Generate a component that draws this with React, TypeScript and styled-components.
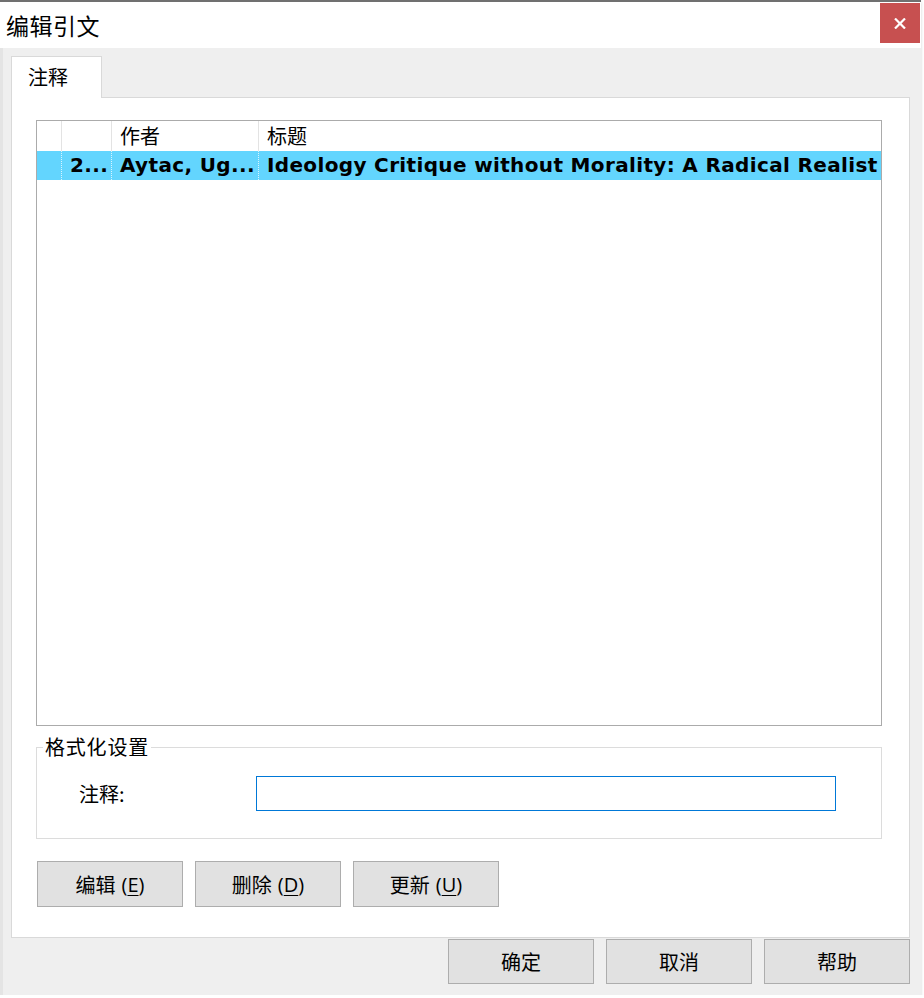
import React from "react";
import styled, { createGlobalStyle } from "styled-components";

const GlobalStyle = createGlobalStyle`
  html, body { margin: 0; padding: 0; background: #ffffff; }
  body { font-family: "Noto Sans CJK SC", "Noto Sans", sans-serif; }
  * { box-sizing: border-box; }
`;

const CJK = `"Noto Sans CJK SC", "Noto Sans", sans-serif`;

const Window = styled.div`
  width: 921px;
  height: 995px;
  display: flex;
  flex-direction: column;
  border-top: 2px solid #707070;
  background: #efefef;
  box-shadow: 0 2px 3px rgba(0, 0, 0, 0.18);
`;

const TitleBar = styled.div`
  height: 46px;
  background: #ffffff;
  display: flex;
  align-items: flex-start;
  justify-content: space-between;
`;

const Title = styled.div`
  font-family: ${CJK};
  font-size: 23px;
  line-height: 46px;
  color: #000;
  padding-left: 6px;
  letter-spacing: 0.5px;
`;

const CloseButton = styled.div`
  width: 40px;
  height: 40px;
  margin-top: 1px;
  margin-right: 1px;
  background: #c75050;
  display: flex;
  align-items: center;
  justify-content: center;
`;

const Body = styled.div`
  flex: 1;
  display: flex;
  flex-direction: column;
  padding: 8px 11px 0 8px;
  border-left: 3px solid #e4e4e4;
`;

const TabStrip = styled.div`
  display: flex;
  height: 41px;
`;

const Tab = styled.div`
  width: 91px;
  height: 42px;
  background: #ffffff;
  border: 1px solid #d9d9d9;
  border-bottom: none;
  position: relative;
  z-index: 1;
  font-family: ${CJK};
  font-size: 20px;
  line-height: 40px;
  padding-left: 16px;
  color: #000;
`;

const Panel = styled.div`
  height: 841px;
  background: #ffffff;
  border: 1px solid #d9d9d9;
  padding: 22px 0 30px 24px;
  display: flex;
  flex-direction: column;
`;

const List = styled.div`
  width: 846px;
  height: 606px;
  border: 1px solid #ababab;
  overflow: hidden;
`;

const GridRow = styled.div<{ $selected?: boolean }>`
  display: grid;
  grid-template-columns: 24px 50px 147px 622px;
  height: ${(p) => (p.$selected ? 29 : 30)}px;
  background: ${(p) => (p.$selected ? "#63d5fe" : "#ffffff")};
`;

const HeaderCell = styled.div<{ $first?: boolean }>`
  border-left: ${(p) => (p.$first ? "none" : "1px solid #e3e3e3")};
  font-family: ${CJK};
  font-size: 20px;
  line-height: 30px;
  padding-left: 8px;
  color: #000;
  white-space: nowrap;
  overflow: hidden;
`;

const Cell = styled.div<{ $first?: boolean }>`
  border-left: ${(p) => (p.$first ? "none" : "1px dotted #d8f4ff")};
  font-family: "DejaVu Sans", Verdana, sans-serif;
  font-weight: bold;
  font-size: 20px;
  line-height: 29px;
  padding-left: 8px;
  letter-spacing: 0.35px;
  color: #000;
  white-space: nowrap;
  overflow: hidden;
`;

const Group = styled.fieldset`
  width: 846px;
  margin: 11px 0 0 0;
  padding: 0;
  min-width: 0;
  border: 1px solid #dcdcdc;
`;

const Legend = styled.legend`
  margin-left: 6px;
  padding: 0 2px;
  font-family: ${CJK};
  font-size: 20px;
  line-height: 20px;
  letter-spacing: 0.8px;
  color: #000;
`;

const FieldRow = styled.div`
  display: flex;
  align-items: center;
  padding: 19px 0 27px 42px;
`;

const FieldLabel = styled.label`
  width: 177px;
  font-family: ${CJK};
  font-size: 20px;
  line-height: 35px;
  color: #000;
`;

const TextInput = styled.input`
  width: 580px;
  height: 35px;
  border: 1px solid #0078d7;
  outline: none;
  padding: 0 4px;
  font-family: ${CJK};
  font-size: 18px;
  background: #fff;
`;

const ButtonRow = styled.div<{ $end?: boolean }>`
  display: flex;
  gap: 12px;
  justify-content: ${(p) => (p.$end ? "flex-end" : "flex-start")};
`;

const ActionRow = styled(ButtonRow)`
  margin-top: 22px;
  margin-left: 1px;
`;

const FooterRow = styled(ButtonRow)`
  margin-top: 1px;
`;

const Button = styled.div<{ $h?: number }>`
  width: 146px;
  height: ${(p) => p.$h ?? 46}px;
  background: #e1e1e1;
  border: 1px solid #adadad;
  display: flex;
  align-items: center;
  justify-content: center;
  font-family: ${CJK};
  font-size: 20px;
  color: #000;
  white-space: pre;
`;

const Latin = styled.span`
  font-family: "Open Sans", "Noto Sans", sans-serif;
  font-size: 20px;
  margin-left: 6px;
`;

const Key = styled.span`
  text-decoration: underline;
  text-underline-offset: 3px;
  text-decoration-thickness: 1px;
`;

export default function App() {
  return (
    <>
      <GlobalStyle />
      <Window>
        <TitleBar>
          <Title>编辑引文</Title>
          <CloseButton>
            <svg width="12" height="11" viewBox="0 0 12 11">
              <path d="M1 0.5 L11 10.5 M11 0.5 L1 10.5" stroke="#fff" strokeWidth="2.2" />
            </svg>
          </CloseButton>
        </TitleBar>
        <Body>
          <TabStrip>
            <Tab>注释</Tab>
          </TabStrip>
          <Panel>
            <List>
              <GridRow>
                <HeaderCell $first />
                <HeaderCell />
                <HeaderCell>作者</HeaderCell>
                <HeaderCell>标题</HeaderCell>
              </GridRow>
              <GridRow $selected>
                <Cell $first />
                <Cell>2...</Cell>
                <Cell>Aytac, Ug...</Cell>
                <Cell>Ideology Critique without Morality: A Radical Realist</Cell>
              </GridRow>
            </List>
            <Group>
              <Legend>格式化设置</Legend>
              <FieldRow>
                <FieldLabel>注释:</FieldLabel>
                <TextInput type="text" defaultValue="" />
              </FieldRow>
            </Group>
            <ActionRow>
              <Button>
                编辑<Latin>(<Key>E</Key>)</Latin>
              </Button>
              <Button>
                删除<Latin>(<Key>D</Key>)</Latin>
              </Button>
              <Button>
                更新<Latin>(<Key>U</Key>)</Latin>
              </Button>
            </ActionRow>
          </Panel>
          <FooterRow $end>
            <Button $h={45}>确定</Button>
            <Button $h={45}>取消</Button>
            <Button $h={45}>帮助</Button>
          </FooterRow>
        </Body>
      </Window>
    </>
  );
}
